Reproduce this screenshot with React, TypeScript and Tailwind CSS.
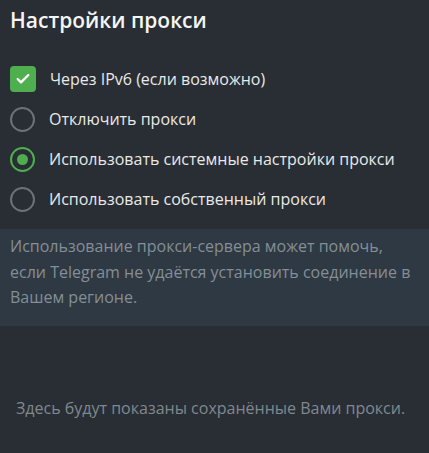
import { Check } from "lucide-react"

const options = [
  { label: "Отключить прокси", checked: false },
  { label: "Использовать системные настройки прокси", checked: true },
  { label: "Использовать собственный прокси", checked: false },
]

function Radio({ checked }: { checked: boolean }) {
  return (
    <div
      className={`w-[25px] h-[25px] rounded-full border-2 flex items-center justify-center ${
        checked ? "border-[#4fae4e]" : "border-[#6c7278]"
      }`}
    >
      {checked && <div className="w-[11px] h-[11px] rounded-full bg-[#4fae4e]" />}
    </div>
  )
}

export default function App() {
  return (
    <div className="w-[429px] h-[453px] bg-[#282e33] flex flex-col font-['Open_Sans',sans-serif] overflow-hidden">
      <h2 className="text-[21px] font-semibold text-[#f5f5f5] px-[10px] pt-[4px] leading-[32px]">
        Настройки прокси
      </h2>

      <div className="flex flex-col mt-[23px] px-[10px]">
        <div className="flex items-center gap-[14px] h-[40px]">
          <div className="w-[26px] h-[26px] rounded-[4px] bg-[#4fae4e] flex items-center justify-center">
            <Check size={16} strokeWidth={3.5} className="text-white" />
          </div>
          <span className="text-[16px] text-[#e9e9e9]">Через IPv6 (если возможно)</span>
        </div>
        {options.map((o) => (
          <div key={o.label} className="flex items-center gap-[14px] h-[40px]">
            <Radio checked={o.checked} />
            <span className="text-[16px] text-[#e9e9e9]">{o.label}</span>
          </div>
        ))}
      </div>

      <div className="mt-[10px] bg-[#2f3943] pl-[10px] pr-[14px] pt-[5px] pb-[15px] text-[16px] leading-[25.5px] text-[#848e96]">
        Использование прокси-сервера может помочь, если Telegram не удаётся установить соединение в
        Вашем регионе.
      </div>

      <div className="mt-[71px] pl-[16px] text-[16px] leading-[22px] text-[#80888f]">
        Здесь будут показаны сохранённые Вами прокси.
      </div>
    </div>
  )
}
